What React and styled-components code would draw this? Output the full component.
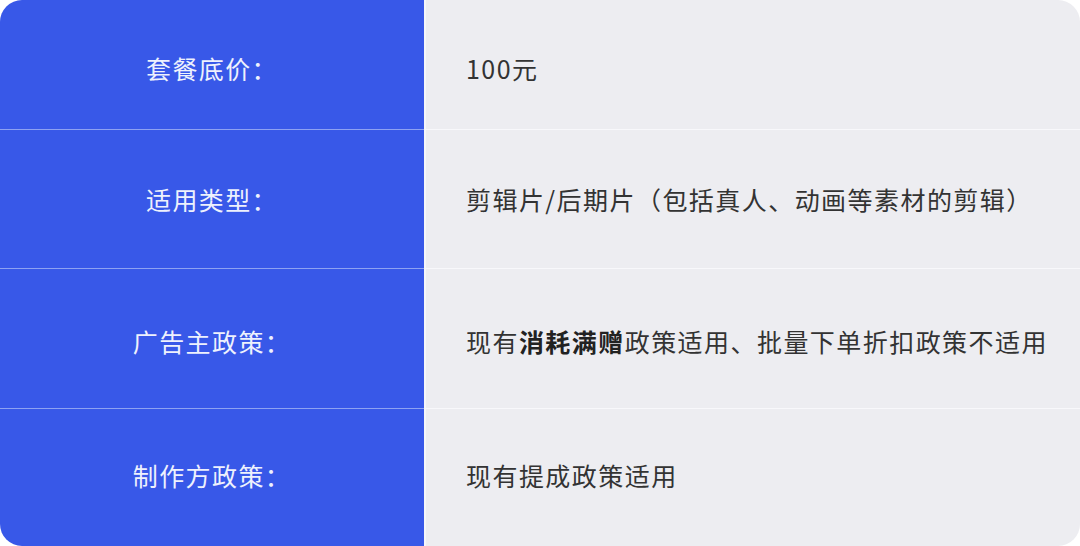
import styled, { createGlobalStyle } from 'styled-components';

const GlobalStyle = createGlobalStyle`
	html, body {
		margin: 0;
		padding: 0;
		background: #ffffff;
	}
	body {
		font-family: 'Noto Sans CJK SC', 'Noto Sans', sans-serif;
	}
`;

const Table = styled.div`
	width: 1080px;
	height: 546px;
	border-radius: 22px;
	overflow: hidden;
	display: flex;
	flex-direction: column;
`;

const Row = styled.div`
	display: grid;
	grid-template-columns: 424px 1fr;
	height: ${(p) => p.$height}px;
	flex-shrink: 0;
`;

const Label = styled.div`
	background: #3858e8;
	color: #eef1fd;
	font-size: 25px;
	letter-spacing: 1.4px;
	display: flex;
	align-items: center;
	justify-content: center;
	padding-top: ${(p) => Math.max(p.$offset, 0)}px;
	padding-bottom: ${(p) => Math.max(-p.$offset, 0)}px;
	border-bottom: ${(p) => (p.$last ? 'none' : '1px solid #8ea2f2')};
`;

const Value = styled.div`
	background: #ededf1;
	color: #333333;
	font-size: 25px;
	letter-spacing: 1.45px;
	display: flex;
	align-items: center;
	padding-left: 40px;
	padding-top: ${(p) => Math.max(p.$offset, 0)}px;
	padding-bottom: ${(p) => Math.max(-p.$offset, 0)}px;
	border-left: 2px solid #f6f6f9;
	border-bottom: ${(p) => (p.$last ? 'none' : '1px solid #f8f8fb')};

	b {
		font-weight: 700;
		color: #222222;
	}
`;

const rows = [
	{ label: '套餐底价：', value: '100元', height: 130, offset: 6 },
	{ label: '适用类型：', value: '剪辑片/后期片（包括真人、动画等素材的剪辑）', height: 139, offset: 0 },
	{
		label: '广告主政策：',
		value: (
			<>
				现有<b>消耗满赠</b>政策适用、批量下单折扣政策不适用
			</>
		),
		height: 140,
		offset: 4,
	},
	{ label: '制作方政策：', value: '现有提成政策适用', height: 137, offset: -6 },
];

export default function App() {
	return (
		<>
			<GlobalStyle />
			<Table>
				{rows.map((r, i) => (
					<Row key={i} $height={r.height}>
						<Label $offset={r.offset} $last={i === rows.length - 1}>
							{r.label}
						</Label>
						<Value $offset={r.offset} $last={i === rows.length - 1}>
							{r.value}
						</Value>
					</Row>
				))}
			</Table>
		</>
	);
}
